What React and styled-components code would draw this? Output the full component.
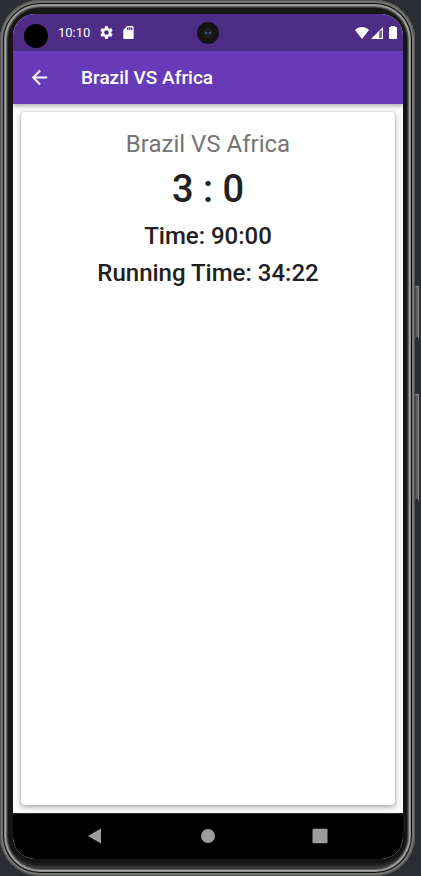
import React from "react";
import styled, { createGlobalStyle } from "styled-components";

const GlobalStyle = createGlobalStyle`
  * { box-sizing: border-box; }
  body {
    margin: 0;
    background: #2c2d32;
    font-family: Roboto, "Liberation Sans", sans-serif;
  }
`;

const Stage = styled.div`
  display: grid;
  grid-template-columns: minmax(0, 1fr) 6px;
  min-height: 100vh;
`;

const Phone = styled.div`
  display: flex;
  flex-direction: column;
  padding: 14px 12px 17px 13px;
  border-radius: 40px;
  background: #151515;
  box-shadow:
    inset 0 0 0 1px #555755,
    inset 0 0 0 3px #747672,
    inset 0 0 0 4px #0c0c0c,
    inset 0 0 0 5px #8f8f8f,
    inset 0 0 0 6px #a5a5a5,
    inset 0 0 0 7px #60605e,
    inset 0 0 0 8px #383838,
    inset 0 -12px 5px -3px #555555;
`;

const SideKeys = styled.div`
  display: flex;
  flex-direction: column;
  gap: 54px;
  padding-top: 286px;
`;

const SideKey = styled.div`
  width: 4px;
  height: ${({ $length }) => $length}px;
  background: #5f5f5f;
  border: 1px solid #8b8b8b;
  border-left-color: #444444;
  border-bottom: 3px solid #29292b;
`;

const Screen = styled.main`
  flex: 1;
  display: flex;
  flex-direction: column;
  overflow: hidden;
  border-radius: 22px;
  background: #fafafa;
`;

const StatusBar = styled.div`
  display: grid;
  grid-template-columns: 1fr auto 1fr;
  align-items: center;
  height: 37px;
  padding: 0 6px;
  background: #4e2d87;
  color: #ffffff;
`;

const StatusGroup = styled.div`
  display: flex;
  align-items: center;
  justify-content: ${({ $end }) => ($end ? "flex-end" : "flex-start")};
  gap: ${({ $end }) => ($end ? "2px" : "10px")};
  padding-left: ${({ $end }) => ($end ? "0" : "5px")};
`;

const Cutout = styled.span`
  width: 24px;
  height: 24px;
  margin-top: 7px;
  border-radius: 50%;
  background: #000000;
`;

const Clock = styled.time`
  font-size: 13px;
  line-height: 16px;
`;

const Glyph = styled.svg`
  display: block;
  flex: none;
`;

const AppBar = styled.header`
  position: relative;
  display: flex;
  align-items: center;
  gap: 30px;
  height: 53px;
  padding: 0 15px;
  background: #673ab7;
  color: #ffffff;
  box-shadow: 0 2px 4px rgba(0, 0, 0, 0.3);
`;

const IconButton = styled.button`
  display: flex;
  align-items: center;
  justify-content: center;
  padding: 0;
  border: 0;
  background: transparent;
  color: inherit;
  cursor: pointer;
`;

const AppTitle = styled.h1`
  margin: 0;
  font-size: 19px;
  line-height: 24px;
  font-weight: 500;
`;

const Content = styled.div`
  flex: 1;
  display: flex;
  padding: 8px;
`;

const ScoreCard = styled.section`
  flex: 1;
  display: flex;
  flex-direction: column;
  align-items: center;
  padding-top: 16px;
  border-radius: 4px;
  background: #ffffff;
  box-shadow: 0 2px 5px rgba(0, 0, 0, 0.32), 0 0 2px rgba(0, 0, 0, 0.16);
`;

const MatchName = styled.h2`
  margin: 0;
  color: #757575;
  font-size: 24px;
  line-height: 32px;
  font-weight: 400;
`;

const Score = styled.p`
  margin: 0;
  color: #212121;
  font-size: 38px;
  line-height: 58px;
  font-weight: 500;
`;

const TimeLine = styled.p`
  margin: 0;
  color: #212121;
  font-size: 24px;
  line-height: 37px;
  font-weight: 500;
`;

const NavBar = styled.nav`
  display: flex;
  align-items: center;
  justify-content: space-between;
  height: 46px;
  padding: 0 75px 2px 74px;
  border-top: 1px solid #2b2d2b;
  background: #000000;
  color: #9c9c9c;
`;

function GearIcon() {
  return (
    <Glyph width="13" height="13" viewBox="2 2 20 20" fill="currentColor">
      <path d="M19.14 12.94c.04-.3.06-.61.06-.94s-.02-.64-.07-.94l2.03-1.58a.5.5 0 0 0 .12-.61l-1.92-3.32a.49.49 0 0 0-.59-.22l-2.39.96a7 7 0 0 0-1.62-.94l-.36-2.54a.48.48 0 0 0-.48-.41h-3.84a.47.47 0 0 0-.47.41l-.36 2.54c-.59.24-1.13.57-1.62.94l-2.39-.96a.48.48 0 0 0-.59.22L2.74 8.87a.48.48 0 0 0 .12.61l2.03 1.58c-.05.3-.09.63-.09.94s.02.64.07.94l-2.03 1.58a.5.5 0 0 0-.12.61l1.92 3.32c.12.22.37.29.59.22l2.39-.96c.5.38 1.03.7 1.62.94l.36 2.54c.05.24.24.41.48.41h3.84c.24 0 .44-.17.47-.41l.36-2.54c.59-.24 1.13-.56 1.62-.94l2.39.96c.22.08.47 0 .59-.22l1.92-3.32a.48.48 0 0 0-.12-.61zM12 15.6a3.6 3.6 0 1 1 0-7.2 3.6 3.6 0 0 1 0 7.2z" />
    </Glyph>
  );
}

function SdCardIcon() {
  return (
    <Glyph width="11" height="13" viewBox="4 2 16 20" fill="currentColor">
      <path d="M18 2h-8L4 8v12c0 1.1.9 2 2 2h12c1.1 0 2-.9 2-2V4c0-1.1-.9-2-2-2zm-6 6h-2V4h2zm3 0h-2V4h2zm3 0h-2V4h2z" />
    </Glyph>
  );
}

function CameraIcon() {
  return (
    <Glyph width="22" height="22" viewBox="0 0 22 22">
      <circle cx="11" cy="11" r="11" fill="#141414" />
      <circle cx="11" cy="11" r="5" fill="#1d1d1e" />
      <circle cx="9" cy="11" r="1.3" fill="#3b626b" />
      <circle cx="13" cy="11" r="1.3" fill="#345782" />
    </Glyph>
  );
}

function WifiIcon() {
  return (
    <Glyph width="14" height="12" viewBox="0 0 14 12" fill="currentColor">
      <path d="M0 3C4-.9 10-.9 14 3L7 12z" />
    </Glyph>
  );
}

function SignalIcon() {
  return (
    <Glyph width="12" height="12" viewBox="0 0 12 12">
      <path d="M0 12 12 0V12z" fill="#ffffff" />
      <path d="M8 5.2 10.8 2.4V10.8H8z" fill="#5d3d92" />
      <path d="M9 5V10" stroke="#a794c5" strokeWidth="1" />
    </Glyph>
  );
}

function BatteryIcon() {
  return (
    <Glyph width="12" height="13" viewBox="0 0 12 13" fill="currentColor">
      <path d="M6 0h4v1h1.2q.8 0 .8.8v10.4q0 .8-.8.8H4.8q-.8 0-.8-.8V1.8Q4 1 4.800 1H6z" />
    </Glyph>
  );
}

function BackArrowIcon() {
  return (
    <Glyph width="23" height="23" viewBox="0 0 24 24" fill="currentColor">
      <path d="M20 11H7.830l5.590-5.590L12 4l-8 8 8 8 1.410-1.410L7.830 13H20z" />
    </Glyph>
  );
}

const NAV_ACTIONS = [
  { label: "Back", shape: <path d="M1 8 14 .5V15.500z" /> },
  { label: "Home", shape: <circle cx="8" cy="8" r="7" /> },
  { label: "Recent apps", shape: <rect x=".5" y=".8" width="15" height="14.500" rx="1.500" /> },
];

export default function App() {
  return (
    <>
      <GlobalStyle />
      <Stage>
        <Phone>
          <Screen>
            <StatusBar>
              <StatusGroup>
                <Cutout />
                <Clock>10:10</Clock>
                <GearIcon />
                <SdCardIcon />
              </StatusGroup>
              <CameraIcon />
              <StatusGroup $end>
                <WifiIcon />
                <SignalIcon />
                <BatteryIcon />
              </StatusGroup>
            </StatusBar>
            <AppBar>
              <IconButton type="button" aria-label="Go back">
                <BackArrowIcon />
              </IconButton>
              <AppTitle>Brazil VS Africa</AppTitle>
            </AppBar>
            <Content>
              <ScoreCard>
                <MatchName>Brazil VS Africa</MatchName>
                <Score>3 : 0</Score>
                <TimeLine>Time: 90:00</TimeLine>
                <TimeLine>Running Time: 34:22</TimeLine>
              </ScoreCard>
            </Content>
            <NavBar>
              {NAV_ACTIONS.map(({ label, shape }) => (
                <IconButton key={label} type="button" aria-label={label}>
                  <Glyph width="16" height="16" viewBox="0 0 16 16" fill="currentColor">
                    {shape}
                  </Glyph>
                </IconButton>
              ))}
            </NavBar>
          </Screen>
        </Phone>
        <SideKeys>
          <SideKey $length={54} />
          <SideKey $length={108} />
        </SideKeys>
      </Stage>
    </>
  );
}
